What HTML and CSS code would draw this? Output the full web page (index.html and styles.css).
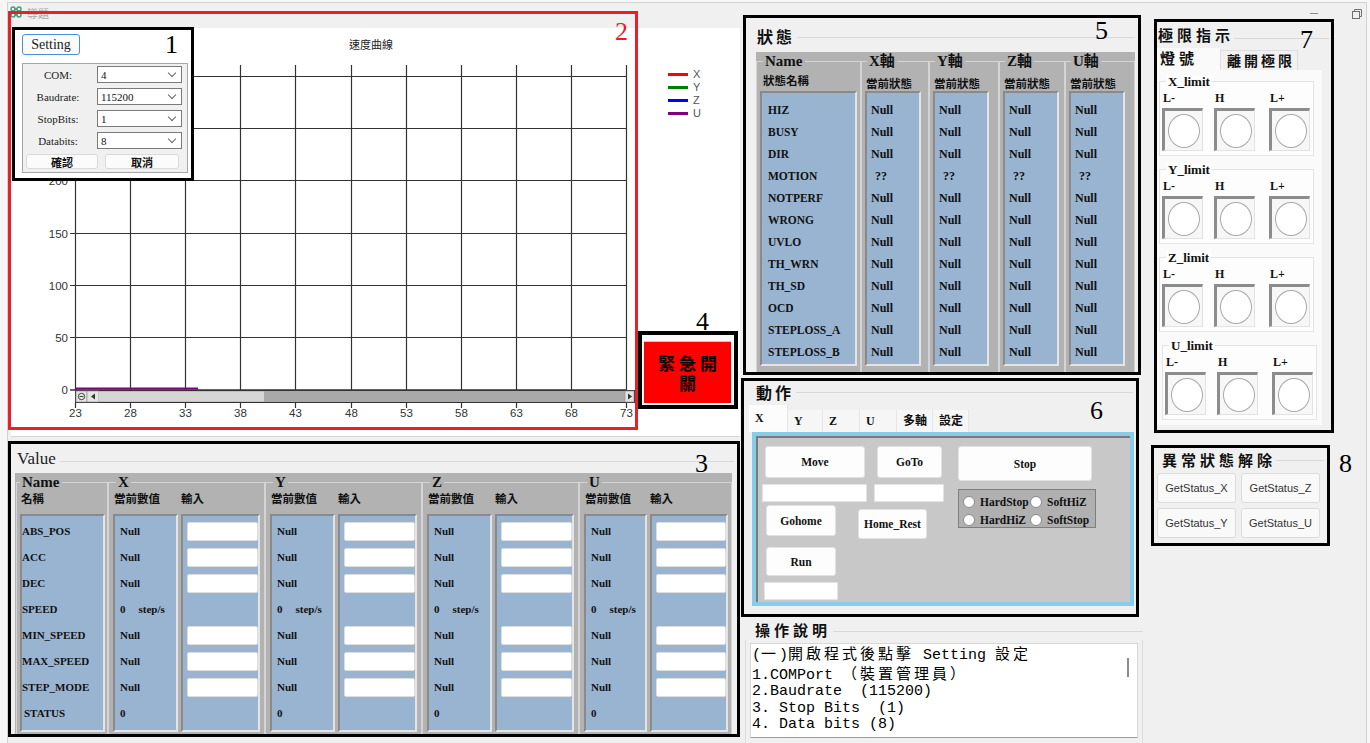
FILE: index.html
```html
<!DOCTYPE html>
<html lang="zh-Hant">
<head>
<meta charset="utf-8">
<title>導題</title>
<link rel="stylesheet" href="styles.css">
</head>
<body>
<div class="window">
  <div class="titlebar">
    <svg class="appicon" viewBox="0 0 12 12" width="12" height="12">
      <g fill="none" stroke="#3d9b76" stroke-width="1.4">
        <circle cx="3" cy="3" r="2"/><circle cx="9" cy="3" r="2"/><circle cx="3" cy="9" r="2"/><circle cx="9" cy="9" r="2"/>
        <path d="M3 5v2M9 5v2M5 3h2M5 9h2"/>
      </g>
    </svg>
    <span class="wtitle">導題</span>
    <span class="wmin"></span>
    <svg class="wrestore" viewBox="0 0 10 10" width="10" height="10">
      <g fill="none" stroke="#707070" stroke-width="1">
        <rect x="0.5" y="2.5" width="7" height="7"/>
        <path d="M2.5 2.5V0.5H9.5V7.5H7.5"/>
      </g>
    </svg>
  </div>

  <div class="client">
    <!-- Column A: chart + values -->
    <div class="colA">
      <div class="chart">
        <svg class="plot" width="729" height="409" viewBox="0 0 729 409">
          <text class="ctitle" x="360" y="21" text-anchor="middle">速度曲線</text>
          <g stroke="#333" stroke-width="1.2" fill="none">
            <path d="M64.5 37V362M119.5 37V362M174.5 37V362M229.5 37V362M284.5 37V362M340.5 37V362M395.5 37V362M450.5 37V362M505.5 37V362M560.5 37V362M615.5 37V362"/>
            <path d="M64.5 375V380M119.5 375V380M174.5 375V380M229.5 375V380M284.5 375V380M340.5 375V380M395.5 375V380M450.5 375V380M505.5 375V380M560.5 375V380M615.5 375V380"/>
            <path d="M59 48.5H616M59 100.5H616M59 152.5H616M59 205.5H616M59 257.5H616M59 309.5H616"/>
            <path d="M59 362H616" stroke-width="1.6"/>
          </g>
          <g class="ax" text-anchor="end">
            <text x="57" y="156.5">200</text>
            <text x="57" y="209.5">150</text>
            <text x="57" y="261.5">100</text>
            <text x="57" y="313.5">50</text>
            <text x="57" y="366">0</text>
          </g>
          <g class="ax" text-anchor="middle">
            <text x="64.5" y="389">23</text>
            <text x="119.5" y="389">28</text>
            <text x="174.5" y="389">33</text>
            <text x="229.5" y="389">38</text>
            <text x="284.5" y="389">43</text>
            <text x="340.5" y="389">48</text>
            <text x="395.5" y="389">53</text>
            <text x="450.5" y="389">58</text>
            <text x="505.5" y="389">63</text>
            <text x="560.5" y="389">68</text>
            <text x="615.5" y="389">73</text>
          </g>
          <rect x="64.5" y="362.5" width="559" height="12" fill="#a9a9a9" stroke="#333"/>
          <rect x="65" y="363" width="11" height="11" fill="#e4e4e4" stroke="#888" stroke-width="0.6"/>
          <circle cx="70.5" cy="368.5" r="3.2" fill="none" stroke="#333" stroke-width="0.9"/>
          <path d="M68.5 368.5H72.5" stroke="#333" stroke-width="0.9"/>
          <rect x="76" y="363" width="12" height="11" fill="#e4e4e4" stroke="#888" stroke-width="0.6"/>
          <path d="M84 365.5L80 368.5L84 371.5Z" fill="#333"/>
          <rect x="88" y="363.5" width="165" height="10" fill="#d6d6d6"/>
          <rect x="614" y="363" width="9" height="11" fill="#e4e4e4" stroke="#888" stroke-width="0.6"/>
          <path d="M617 365.5L621 368.5L617 371.5Z" fill="#333"/>
          <path d="M64 360.6H187" stroke="#800080" stroke-width="2"/>
        </svg>

        <div class="legend">
          <div class="lg-i"><span class="lg-l lx"></span>X</div>
          <div class="lg-i"><span class="lg-l ly"></span>Y</div>
          <div class="lg-i"><span class="lg-l lz"></span>Z</div>
          <div class="lg-i"><span class="lg-l lu"></span>U</div>
        </div>

        <div class="redbox"><span class="num red n2">2</span></div>

        <div class="popup">
          <span class="num n1">1</span>
          <div class="setbtn">Setting</div>
          <div class="setbox">
            <div class="srow"><span class="slab">COM:</span><span class="combo">4</span></div>
            <div class="srow"><span class="slab">Baudrate:</span><span class="combo">115200</span></div>
            <div class="srow"><span class="slab">StopBits:</span><span class="combo">1</span></div>
            <div class="srow"><span class="slab">Databits:</span><span class="combo">8</span></div>
            <div class="sbtns"><span class="sbtn">確認</span><span class="sbtn sbtn2">取消</span></div>
          </div>
        </div>

        <div class="estop">
          <span class="num n4">4</span>
          <div class="estop-btn">緊急開關</div>
        </div>
      </div>

      <div class="value">
        <span class="num n3">3</span>
        <div class="gtitle vp-t">Value</div>
        <div class="gray vgray">
          <div class="fs fs-n">
            <span class="gt">Name</span>
            <div class="vhdr">名稱</div>
            <div class="vcols">
              <div class="blue vname">
                <div class="vr">ABS_POS</div>
                <div class="vr">ACC</div>
                <div class="vr">DEC</div>
                <div class="vr">SPEED</div>
                <div class="vr">MIN_SPEED</div>
                <div class="vr">MAX_SPEED</div>
                <div class="vr">STEP_MODE</div>
                <div class="vr ind">STATUS</div>
              </div>
            </div>
          </div>

          <div class="fs fs-a">
            <span class="gt">X</span>
            <div class="vhdr"><span class="h1">當前數值</span><span>輸入</span></div>
            <div class="vcols">
              <div class="blue vnull">
                <div class="vr">Null</div><div class="vr">Null</div><div class="vr">Null</div>
                <div class="vr"><span>0</span><span class="unit">step/s</span></div>
                <div class="vr">Null</div><div class="vr">Null</div><div class="vr">Null</div>
                <div class="vr">0</div>
              </div>
              <div class="blue vin">
                <div class="vr"><span class="tb"></span></div><div class="vr"><span class="tb"></span></div><div class="vr"><span class="tb"></span></div>
                <div class="vr"></div>
                <div class="vr"><span class="tb"></span></div><div class="vr"><span class="tb"></span></div><div class="vr"><span class="tb"></span></div>
                <div class="vr"></div>
              </div>
            </div>
          </div>

          <div class="fs fs-a">
            <span class="gt">Y</span>
            <div class="vhdr"><span class="h1">當前數值</span><span>輸入</span></div>
            <div class="vcols">
              <div class="blue vnull">
                <div class="vr">Null</div><div class="vr">Null</div><div class="vr">Null</div>
                <div class="vr"><span>0</span><span class="unit">step/s</span></div>
                <div class="vr">Null</div><div class="vr">Null</div><div class="vr">Null</div>
                <div class="vr">0</div>
              </div>
              <div class="blue vin">
                <div class="vr"><span class="tb"></span></div><div class="vr"><span class="tb"></span></div><div class="vr"><span class="tb"></span></div>
                <div class="vr"></div>
                <div class="vr"><span class="tb"></span></div><div class="vr"><span class="tb"></span></div><div class="vr"><span class="tb"></span></div>
                <div class="vr"></div>
              </div>
            </div>
          </div>

          <div class="fs fs-a">
            <span class="gt">Z</span>
            <div class="vhdr"><span class="h1">當前數值</span><span>輸入</span></div>
            <div class="vcols">
              <div class="blue vnull">
                <div class="vr">Null</div><div class="vr">Null</div><div class="vr">Null</div>
                <div class="vr"><span>0</span><span class="unit">step/s</span></div>
                <div class="vr">Null</div><div class="vr">Null</div><div class="vr">Null</div>
                <div class="vr">0</div>
              </div>
              <div class="blue vin">
                <div class="vr"><span class="tb"></span></div><div class="vr"><span class="tb"></span></div><div class="vr"><span class="tb"></span></div>
                <div class="vr"></div>
                <div class="vr"><span class="tb"></span></div><div class="vr"><span class="tb"></span></div><div class="vr"><span class="tb"></span></div>
                <div class="vr"></div>
              </div>
            </div>
          </div>

          <div class="fs fs-a fs-u">
            <span class="gt">U</span>
            <div class="vhdr"><span class="h1">當前數值</span><span>輸入</span></div>
            <div class="vcols">
              <div class="blue vnull">
                <div class="vr">Null</div><div class="vr">Null</div><div class="vr">Null</div>
                <div class="vr"><span>0</span><span class="unit">step/s</span></div>
                <div class="vr">Null</div><div class="vr">Null</div><div class="vr">Null</div>
                <div class="vr">0</div>
              </div>
              <div class="blue vin">
                <div class="vr"><span class="tb"></span></div><div class="vr"><span class="tb"></span></div><div class="vr"><span class="tb"></span></div>
                <div class="vr"></div>
                <div class="vr"><span class="tb"></span></div><div class="vr"><span class="tb"></span></div><div class="vr"><span class="tb"></span></div>
                <div class="vr"></div>
              </div>
            </div>
          </div>
        </div>
      </div>
    </div>

    <!-- Column B: status, action, instructions -->
    <div class="colB">
      <div class="status">
        <span class="num n5">5</span>
        <div class="gtitle st-t">狀態</div>
        <div class="gray sgray">
          <div class="fs sg sg-n">
            <span class="gt">Name</span>
            <div class="shdr">狀態名稱</div>
            <div class="blue sblue sblue-n">
              <div class="sr">HIZ</div><div class="sr">BUSY</div><div class="sr">DIR</div><div class="sr">MOTION</div>
              <div class="sr">NOTPERF</div><div class="sr">WRONG</div><div class="sr">UVLO</div><div class="sr">TH_WRN</div>
              <div class="sr">TH_SD</div><div class="sr">OCD</div><div class="sr">STEPLOSS_A</div><div class="sr">STEPLOSS_B</div>
            </div>
          </div>
          <div class="fs sg sg-a sg-x">
            <span class="gt">X軸</span>
            <div class="shdr">當前狀態</div>
            <div class="blue sblue sblue-a">
              <div class="sr">Null</div><div class="sr">Null</div><div class="sr">Null</div><div class="sr q">??</div>
              <div class="sr">Null</div><div class="sr">Null</div><div class="sr">Null</div><div class="sr">Null</div>
              <div class="sr">Null</div><div class="sr">Null</div><div class="sr">Null</div><div class="sr">Null</div>
            </div>
          </div>
          <div class="fs sg sg-a sg-y">
            <span class="gt">Y軸</span>
            <div class="shdr">當前狀態</div>
            <div class="blue sblue sblue-a">
              <div class="sr">Null</div><div class="sr">Null</div><div class="sr">Null</div><div class="sr q">??</div>
              <div class="sr">Null</div><div class="sr">Null</div><div class="sr">Null</div><div class="sr">Null</div>
              <div class="sr">Null</div><div class="sr">Null</div><div class="sr">Null</div><div class="sr">Null</div>
            </div>
          </div>
          <div class="fs sg sg-a sg-z">
            <span class="gt">Z軸</span>
            <div class="shdr">當前狀態</div>
            <div class="blue sblue sblue-a">
              <div class="sr">Null</div><div class="sr">Null</div><div class="sr">Null</div><div class="sr q">??</div>
              <div class="sr">Null</div><div class="sr">Null</div><div class="sr">Null</div><div class="sr">Null</div>
              <div class="sr">Null</div><div class="sr">Null</div><div class="sr">Null</div><div class="sr">Null</div>
            </div>
          </div>
          <div class="fs sg sg-a sg-y">
            <span class="gt">U軸</span>
            <div class="shdr">當前狀態</div>
            <div class="blue sblue sblue-a">
              <div class="sr">Null</div><div class="sr">Null</div><div class="sr">Null</div><div class="sr q">??</div>
              <div class="sr">Null</div><div class="sr">Null</div><div class="sr">Null</div><div class="sr">Null</div>
              <div class="sr">Null</div><div class="sr">Null</div><div class="sr">Null</div><div class="sr">Null</div>
            </div>
          </div>
        </div>
      </div>

      <div class="action">
        <span class="num n6">6</span>
        <div class="gtitle ac-t">動作</div>
        <div class="tabs">
          <span class="tab sel tw39">X</span>
          <span class="tab tw35">Y</span>
          <span class="tab tw37">Z</span>
          <span class="tab tw37">U</span>
          <span class="tab tw36">多軸</span>
          <span class="tab tw36">設定</span>
        </div>
        <div class="tabpage">
          <div class="tp-in">
            <div class="c1">
              <div class="btn b-move">Move</div>
              <div class="inp i-1"></div>
              <div class="btn b-home">Gohome</div>
              <div class="btn b-run">Run</div>
              <div class="inp i-3"></div>
            </div>
            <div class="c2">
              <div class="btn b-goto">GoTo</div>
              <div class="inp i-2"></div>
              <div class="btn b-rest">Home_Rest</div>
            </div>
            <div class="c3">
              <div class="btn b-stop">Stop</div>
              <div class="rbox">
                <div class="ri"><span class="rc"></span>HardStop</div>
                <div class="ri"><span class="rc"></span>SoftHiZ</div>
                <div class="ri"><span class="rc"></span>HardHiZ</div>
                <div class="ri"><span class="rc"></span>SoftStop</div>
              </div>
            </div>
          </div>
        </div>
      </div>

      <div class="instr">
        <div class="gtitle in-t">操作說明</div>
        <div class="in-body">
          <div class="in-box">
            <div class="in-text">(<span class="c">一</span>)<span class="c">開啟程式後點擊</span> Setting <span class="c">設定</span>
1.COMPort <span class="c">（裝置管理員）</span>
2.Baudrate  (115200)
3. Stop Bits  (1)
4. Data bits (8)</div>
            <div class="in-scroll"></div>
          </div>
        </div>
      </div>
    </div>

    <!-- Column C: limits + reset -->
    <div class="colC">
      <div class="limits">
        <span class="num n7">7</span>
        <div class="gtitle lm-t">極限指示</div>
        <div class="lm-tabs">
          <span class="lt1">燈號</span>
          <span class="lt2">離開極限</span>
        </div>
        <div class="lm-page">
          <div class="lg">
            <span class="gt">X_limit</span>
            <div class="lrow">
              <div class="lcell"><div class="llab">L-</div><div class="lbox"><span class="led"></span></div></div>
              <div class="lcell lc2"><div class="llab">H</div><div class="lbox"><span class="led"></span></div></div>
              <div class="lcell lc3"><div class="llab">L+</div><div class="lbox"><span class="led"></span></div></div>
            </div>
          </div>
          <div class="lg">
            <span class="gt">Y_limit</span>
            <div class="lrow">
              <div class="lcell"><div class="llab">L-</div><div class="lbox"><span class="led"></span></div></div>
              <div class="lcell lc2"><div class="llab">H</div><div class="lbox"><span class="led"></span></div></div>
              <div class="lcell lc3"><div class="llab">L+</div><div class="lbox"><span class="led"></span></div></div>
            </div>
          </div>
          <div class="lg">
            <span class="gt">Z_limit</span>
            <div class="lrow">
              <div class="lcell"><div class="llab">L-</div><div class="lbox"><span class="led"></span></div></div>
              <div class="lcell lc2"><div class="llab">H</div><div class="lbox"><span class="led"></span></div></div>
              <div class="lcell lc3"><div class="llab">L+</div><div class="lbox"><span class="led"></span></div></div>
            </div>
          </div>
          <div class="lg lg-u">
            <span class="gt">U_limit</span>
            <div class="lrow">
              <div class="lcell"><div class="llab">L-</div><div class="lbox"><span class="led"></span></div></div>
              <div class="lcell lc2"><div class="llab">H</div><div class="lbox"><span class="led"></span></div></div>
              <div class="lcell lc3"><div class="llab">L+</div><div class="lbox"><span class="led"></span></div></div>
            </div>
          </div>
        </div>
      </div>

      <div class="reset">
        <span class="num n8">8</span>
        <div class="gtitle rs-t">異常狀態解除</div>
        <div class="rs-grid">
          <div class="gs">GetStatus_X</div>
          <div class="gs">GetStatus_Z</div>
          <div class="gs">GetStatus_Y</div>
          <div class="gs">GetStatus_U</div>
        </div>
      </div>
    </div>
  </div>
</div>
</body>
</html>
```
FILE: styles.css
```css
*{box-sizing:border-box;margin:0;padding:0}
html,body{width:1370px;height:743px;overflow:hidden}
body{background:#f7f7f7;font-family:"Liberation Serif","Noto Sans CJK TC",serif;color:#111}

.window{margin:2px 0 0 7px;width:1360px;height:741px;border:1px solid #d2d2d2;border-bottom:none;background:#f0f0f0;display:flex;flex-direction:column}
.titlebar{height:25px;flex:none;display:flex;align-items:flex-start;padding:0 4px 0 2px}
.appicon{margin-top:3px;flex:none}
.wtitle{margin-left:5px;font:11px/20px "Noto Sans CJK TC",sans-serif;color:#a8a8a8}
.wmin{margin-left:auto;margin-top:10px;width:8px;height:1px;background:#8a8a8a}
.wrestore{margin-left:34px;margin-top:6px;flex:none}
.client{flex:1;display:flex;align-items:flex-start}

.colA{width:732px;flex:none}
.colB{width:401px;flex:none}
.colC{width:200px;flex:none;margin-left:10px}

.num{position:absolute;font:26px/26px "Liberation Serif",serif;color:#000}
.num.red{color:#e81c24}
.n1{left:150px;top:2px}
.n2{left:604px;top:5px}
.n3{left:684px;top:7px}
.n4{left:54px;top:-26px}
.n5{left:349px;top:0}
.n6{left:346px;top:17px}
.n7{left:143px;top:5px}
.n8{left:185px;top:3px}

/* group titles with trailing line */
.gtitle{display:flex;align-items:flex-start;white-space:nowrap}
.gtitle::after{content:"";flex:1;height:1px;background:#d9d9d9}

/* chart */
.chart{margin-left:3px;width:729px;height:409px;background:#fff;border-bottom:1px solid #d4d4d4;position:relative}
.plot{display:block}
.ctitle{font:11px "Noto Sans CJK TC",sans-serif;fill:#222}
.ax{font:11.5px "Liberation Sans",sans-serif;fill:#333}
.legend{position:absolute;left:657px;top:40px}
.lg-i{display:flex;align-items:center;height:13px;font:11px/13px "Liberation Sans",sans-serif;color:#555}
.lg-l{width:20px;height:3px;margin-right:5px}
.lx{background:#ff0000}
.ly{background:#008000}
.lz{background:#0000ff}
.lu{background:#800080}
.redbox{position:absolute;left:-3px;top:-17px;width:630px;height:419px;border:3px solid #e8202a}

/* settings popup */
.popup{position:absolute;left:1px;top:-1px;width:182px;height:154px;border:3px solid #000;background:#fff;padding:4px 0 0 7px}
.setbtn{width:58px;height:21px;border:1px solid #4a8fdc;border-radius:3px;background:#fbfbfb;font:14px "Liberation Serif",serif;display:flex;align-items:center;justify-content:center;color:#222}
.setbox{margin-top:8px;width:166px;height:110px;border:1px solid #a6a6a6;background:#f0f0f0;padding-top:2px}
.srow{display:flex;align-items:center;height:17px;margin-bottom:5px}
.slab{width:70px;text-align:center;font:11px "Liberation Serif",serif;color:#222}
.combo{margin-left:4px;width:85px;height:17px;border:1px solid #7a7a7a;background:#fff;display:flex;align-items:center;justify-content:space-between;padding:0 6px 0 3px;font:11px "Liberation Serif",serif}
.combo::after{content:"";width:5px;height:5px;border-right:1px solid #666;border-bottom:1px solid #666;transform:rotate(45deg);margin-top:-3px}
.sbtns{display:flex;margin:1px 0 0 3px}
.sbtn{width:72px;height:15px;background:#fbfbfb;border:1px solid #dadada;border-radius:3px;display:flex;align-items:center;justify-content:center;font:bold 11px "Noto Sans CJK TC",sans-serif}
.sbtn2{margin-left:7px;width:74px}

/* emergency stop */
.estop{position:absolute;left:627px;top:303px;width:100px;height:78px;border:4px solid #000;background:#fafafa;padding:6px 3px 2px 2px}
.estop-btn{height:100%;background:#ff0000;border-top:1px solid #f4b4b4;display:flex;align-items:center;justify-content:center;text-align:center;font:bold 17px/20px "Noto Sans CJK TC",sans-serif;letter-spacing:4px;padding:0 7px 0 11px;color:#000}

/* value panel */
.value{margin-top:4px;width:732px;height:296px;border:3px solid #000;position:relative}
.vp-t{height:29px;padding:5px 3px 0 6px;font:17px/20px "Liberation Serif",serif;color:#222}
.vp-t::after{margin:12px 0 0 4px}
.gray{background:#b2b2b2;display:flex;align-items:flex-start}
.vgray{margin-left:4px;width:717px;height:261px}
.fs{margin-top:9px;border:1px solid #d4d4d4;border-bottom:none;flex:none}
.vgray .fs{height:252px}
.fs-n{margin-left:1px;width:92px}
.fs-a{width:157px}
.fs-u{width:153px}
.gt{display:block;width:max-content;margin-top:-8px;padding:0 2px;background:#b2b2b2;font:bold 15px/15px "Liberation Serif","Noto Sans CJK TC",serif;color:#111}
.fs-n .gt{margin-left:3px}
.fs-a .gt{margin-left:7px}
.vhdr{height:24px;padding-top:2px;display:flex;font:bold 11.5px/12px "Noto Sans CJK TC",sans-serif}
.fs-n .vhdr{padding-left:4px}
.vhdr .h1{margin-left:5px;width:67px}
.vcols{display:flex}
.blue{background:#99b4d1;border:2px solid;border-color:#8a8a8a #e4e4e4 #e4e4e4 #8a8a8a;flex:none}
.vcols .blue{height:218px;padding-top:2px}
.vname{margin-left:3px;width:85px}
.vnull{margin-left:4px;width:65px}
.vin{margin-left:3px;width:79px}
.fs-u .vnull{width:63px}
.fs-u .vin{width:78px}
.fs-u .vhdr .h1{width:65px}
.vr{height:26px;display:flex;align-items:center;font:bold 11px "Liberation Serif",serif;color:#111}
.vnull .vr{padding-left:5px}
.vr.ind{padding-left:2px}
.vr .unit{margin-left:13px}
.tb{margin-left:4px;width:71px;height:19px;background:#fff;border:1px solid #dedede;border-radius:2px}

/* status panel */
.status{margin:-13px 0 0 3px;width:398px;height:360px;border:3px solid #000;position:relative}
.st-t{height:34px;padding:8px 3px 0 11px;font:bold 16px/20px "Noto Sans CJK TC",sans-serif;letter-spacing:3px}
.st-t::after{margin:11px 0 0 2px}
.sgray{margin-left:10px;width:379px;height:320px}
.sgray .fs{height:311px}
.sg-n{width:105px}
.sg-x{width:68px}
.sg-y{width:70px}
.sg-z{width:66px}
.sg-n .gt{margin-left:6px}
.sg-a .gt{margin-left:5px}
.shdr{height:22px;padding:8px 0 0 4px;font:bold 11.5px/12px "Noto Sans CJK TC",sans-serif;white-space:nowrap}
.sg-n .shdr{padding:5px 0 0 6px}
.sblue{height:275px;padding-top:6px}
.sblue-n{margin-left:3px;width:97px}
.sblue-a{margin-left:3px;width:56px}
.sr{height:22px;display:flex;align-items:center;font:bold 11.5px "Liberation Serif",serif;color:#111}
.sblue-n .sr{padding-left:6px}
.sblue-a .sr{padding-left:4px;font-size:12px}
.sblue-a .sr.q{padding-left:8px}

/* action panel */
.action{margin:3px 0 0 1px;width:398px;height:239px;border:3px solid #000;position:relative}
.ac-t{height:24px;padding:1px 3px 0 12px;font:bold 16px/20px "Noto Sans CJK TC",sans-serif;letter-spacing:3px}
.ac-t::after{margin:10px 0 0 2px}
.tabs{display:flex;align-items:flex-end;height:27px;margin-left:5px}
.tab{flex:none;height:22px;padding-left:6px;background:#f6f6f6;border-right:1px solid #e6e6e6;font:bold 12px/22px "Liberation Serif","Noto Sans CJK TC",serif}
.tab.sel{height:27px;line-height:26px;background:#fcfcfc}
.tw39{width:39px}
.tw35{width:35px}
.tw37{width:37px}
.tw36{width:36px}
.tabpage{margin-left:8px;width:382px;height:174px;border:4px solid #87cdea}
.tp-in{height:100%;background:#c8c8c8;border-left:2px solid #7b7b7b;border-top:2px solid #7b7b7b;display:flex;align-items:flex-start;padding-top:8px}
.c1{margin-left:4px;width:96px;flex:none}
.c2{width:100px;flex:none}
.c3{flex:none}
.btn{display:flex;align-items:center;justify-content:center;background:#fdfdfd;border:1px solid #e2e2e2;border-radius:3px;font:bold 11.5px "Liberation Serif",serif;color:#111}
.inp{background:#fff;border:1px solid #e4e4e4;border-radius:1px}
.b-move{margin-left:3px;width:100px;height:32px}
.i-1{margin-top:6px;width:105px;height:18px}
.b-home{margin:3px 0 0 4px;width:70px;height:31px}
.b-run{margin:11px 0 0 4px;width:70px;height:29px}
.i-3{margin:6px 0 0 2px;width:74px;height:18px}
.b-goto{margin-left:19px;width:65px;height:32px}
.i-2{margin:6px 0 0 16px;width:70px;height:18px}
.b-rest{margin-top:7px;width:69px;height:30px}
.b-stop{width:134px;height:35px}
.rbox{margin-top:8px;width:138px;height:39px;background:#b0b0b0;border:1px solid #7e7e7e;display:grid;grid-template-columns:67px auto;grid-auto-rows:18px;padding:3px 0 0 4px}
.ri{display:flex;align-items:center;font:bold 11.5px "Liberation Serif",serif;white-space:nowrap}
.rc{width:12px;height:12px;border-radius:50%;background:#fff;border:1px solid #8a8a8a;margin-right:5px;flex:none}

/* instructions */
.instr{margin:3px 0 0 5px;width:398px}
.in-t{height:20px;padding-left:10px;font:bold 15px/20px "Noto Sans CJK TC",sans-serif;letter-spacing:4px}
.in-t::after{margin:11px 0 0 2px}
.in-body{height:103px;border-left:1px solid #dcdcdc;border-right:1px solid #dcdcdc;padding:3px 0 0 4px}
.in-box{width:388px;height:95px;background:#fff;border:1px solid #d8d8d8;border-bottom-color:#9a9a9a;display:flex;padding:1px 0 0 1px}
.in-text{flex:1;font:15px/16.5px "Liberation Mono","Noto Sans CJK TC",monospace;color:#000;white-space:pre}
.in-text .c{font-family:"Noto Sans CJK TC",sans-serif;letter-spacing:3px}
.in-scroll{width:2px;height:19px;background:#8a8a8a;margin:13px 8px 0 0;flex:none}

/* limits panel */
.limits{margin:-9px 0 0 3px;width:180px;height:414px;border:3px solid #000;position:relative}
.lm-t{height:26px;padding:4px 2px 0 1px;font:bold 15px/18px "Noto Sans CJK TC",sans-serif;letter-spacing:4px}
.lm-t::after{margin-top:12px}
.lm-tabs{display:flex;align-items:flex-end;height:22px}
.lt1{width:63px;height:22px;padding-left:3px;background:#fafafa;font:bold 15px/20px "Noto Sans CJK TC",sans-serif;letter-spacing:4px}
.lt2{width:78px;height:20px;padding-left:6px;background:#f1f1f1;border:1px solid #dedede;border-bottom:none;font:bold 14px/19px "Noto Sans CJK TC",sans-serif;letter-spacing:3px;white-space:nowrap}
.lm-page{width:165px;height:355px;background:#fafafa;padding:11px 0 0 2px}
.lg{width:155px;height:75px;border:1px solid #e4e4e4;background:#fdfdfd;margin-bottom:13px}
.lg-u{margin-left:3px}
.lg .gt{background:#fdfdfd;font-size:13px;line-height:14px;margin:-7px 0 0 6px}
.lrow{display:flex;margin-top:2px;padding-left:2px}
.lc2{margin-left:11px}
.lc3{margin-left:14px}
.llab{height:14px;padding-left:1px;font:bold 12px/14px "Liberation Serif",serif}
.lbox{margin-top:3px;width:41px;height:43px;border-style:solid;border-width:3px 1px 1px 3px;border-color:#8c8c8c #e2e2e2 #e2e2e2 #8c8c8c;background:#f7f7f7;display:flex;align-items:center;justify-content:center}
.led{width:32px;height:34px;border-radius:50%;border:1.5px solid #a8a8a8;background:#fff}

/* reset panel */
.reset{margin-top:12px;width:179px;height:101px;border:3px solid #000;position:relative}
.rs-t{height:25px;padding:3px 3px 0 8px;font:bold 15px/18px "Noto Sans CJK TC",sans-serif;letter-spacing:4px}
.rs-t::after{margin-top:9px}
.rs-grid{display:grid;grid-template-columns:79px 79px;grid-auto-rows:30px;gap:5px;margin-left:3px}
.gs{display:flex;align-items:center;justify-content:center;background:#f9f9f9;border:1px solid #dcdcdc;border-radius:3px;font:11px "Liberation Sans",sans-serif;color:#333}
```
